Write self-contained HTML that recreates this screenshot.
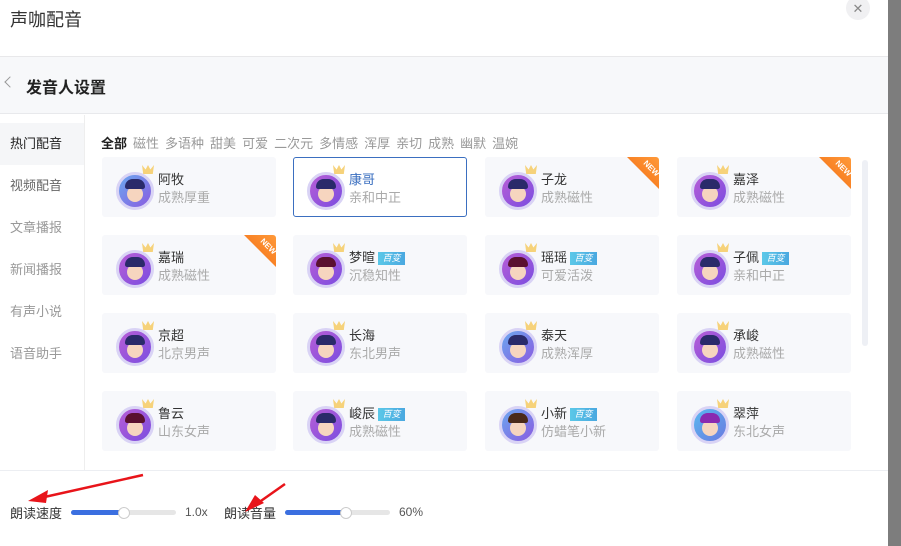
<!DOCTYPE html>
<html><head><meta charset="utf-8"><style>
*{margin:0;padding:0;box-sizing:border-box}
body{width:901px;height:546px;overflow:hidden;background:#fff;font-family:"Liberation Sans","Noto Sans CJK SC",sans-serif;position:relative;color:#333}
.abs{position:absolute}
.strip{left:888px;top:0;width:13px;height:546px;background:#7d7d7d}
.hdr{left:10px;top:6px;font-size:18px;color:#333}
.close{left:846px;top:-4px;width:24px;height:24px;border-radius:50%;background:#f0f0f2;color:#888;font-size:13px;text-align:center;line-height:26px}
.l1{left:0;top:56px;width:888px;height:1px;background:#e8e8ea}
.sub{left:0;top:57px;width:888px;height:57px;background:#f7f8fa;border-bottom:1px solid #e8e9ec}
.sub .t{position:absolute;left:26px;top:17px;font-size:16px;font-weight:bold;color:#222}
.sub .b{position:absolute;left:6px;top:21px;width:8px;height:8px;border-left:1px solid #999;border-bottom:1px solid #999;transform:rotate(45deg)}
.side{left:0;top:115px;width:85px;height:355px;border-right:1px solid #eee}
.si{position:absolute;left:0;width:84px;height:42px;line-height:42px;padding-left:10px;font-size:13px;color:#999}
.tabs{left:101px;top:133px;font-size:13px;color:#999;white-space:nowrap}
.tabs span{margin-right:6px}
.card{position:absolute;width:174px;height:60px;background:#f7f8fb;border-radius:3px;overflow:hidden}
.card.sel{background:#fff;border:1px solid #3b6fc0}
.av{position:absolute;left:14px;top:15px;width:38px;height:38px;border-radius:50%;border:3px solid #d9d3f5;background:linear-gradient(135deg,#b85ed6,#7a4de0)}
.av .f{position:absolute;left:8px;top:11px;width:16px;height:16px;border-radius:50%;background:#f6d5bf}
.av .h{position:absolute;left:6px;top:4px;width:20px;height:10px;border-radius:10px 10px 3px 3px;background:#2a2a6a}
.cr{position:absolute;left:40px;top:8px;width:12px;height:9px;background:#f6d27a;clip-path:polygon(0 0,30% 50%,50% 0,70% 50%,100% 0,90% 100%,10% 100%)}
.nm{position:absolute;left:56px;top:12px;font-size:13px;color:#333}
.ds{position:absolute;left:56px;top:30px;font-size:13px;color:#aaa}
.tag{display:inline-block;margin-left:3px;width:27px;height:13px;background:linear-gradient(90deg,#5bc8e8,#4aa8e0);color:#fff;font-size:9px;line-height:13px;text-align:center;vertical-align:1px;font-style:italic}
.new{position:absolute;right:0;top:0;width:32px;height:32px;background:linear-gradient(45deg,#f26a10,#ff9a3a);clip-path:polygon(0 0,100% 0,100% 100%)}
.new i{position:absolute;right:-2px;top:7px;transform:rotate(45deg);font-size:8px;color:#fff;font-style:normal;font-weight:bold}
.scroll{left:862px;top:160px;width:6px;height:186px;background:#eef0f5;border-radius:3px}
.l2{left:0;top:470px;width:888px;height:1px;background:#eceef2}
.lbl{font-size:13px;color:#333;top:503px}
.tr{height:5px;border-radius:3px;background:#e6e6e6;top:510px}
.fill{height:5px;border-radius:3px;background:#3b6fe0;top:510px}
.kn{width:12px;height:12px;border-radius:50%;background:#fff;border:1px solid #ccc;top:507px}
.val{font-size:12px;color:#555;top:505px}
</style></head><body>
<div class="abs strip"></div>
<div class="abs hdr">声咖配音</div>
<div class="abs close">✕</div>
<div class="abs l1"></div>
<div class="abs sub"><div class="b"></div><div class="t">发音人设置</div></div>
<div class="abs side">
<div class="si" style="top:8px;background:#f5f6f8;color:#222">热门配音</div>
<div class="si" style="top:50px;color:#666">视频配音</div>
<div class="si" style="top:92px">文章播报</div>
<div class="si" style="top:134px">新闻播报</div>
<div class="si" style="top:176px">有声小说</div>
<div class="si" style="top:218px">语音助手</div>
</div>
<div class="abs tabs"><span style="color:#222;font-weight:bold">全部</span><span>磁性</span><span>多语种</span><span>甜美</span><span>可爱</span><span>二次元</span><span>多情感</span><span>浑厚</span><span>亲切</span><span>成熟</span><span>幽默</span><span>温婉</span></div>

<div class="card" style="left:102px;top:157px"><div class="av" style="background:linear-gradient(135deg,#6aa8f0,#8a5be0)"><div class="f"></div><div class="h"></div></div><div class="cr"></div><div class="nm">阿牧</div><div class="ds">成熟厚重</div></div>
<div class="card sel" style="left:293px;top:157px"><div class="av" style="left:13px;top:14px"><div class="f"></div><div class="h"></div></div><div class="cr" style="left:39px;top:7px"></div><div class="nm" style="left:55px;top:11px;color:#3b6fc0">康哥</div><div class="ds" style="left:55px;top:29px">亲和中正</div></div>
<div class="card" style="left:485px;top:157px"><div class="av"><div class="f"></div><div class="h"></div></div><div class="cr"></div><div class="nm">子龙</div><div class="ds">成熟磁性</div><div class="new"><i>NEW</i></div></div>
<div class="card" style="left:677px;top:157px"><div class="av"><div class="f"></div><div class="h"></div></div><div class="cr"></div><div class="nm">嘉泽</div><div class="ds">成熟磁性</div><div class="new"><i>NEW</i></div></div>

<div class="card" style="left:102px;top:235px"><div class="av"><div class="f"></div><div class="h"></div></div><div class="cr"></div><div class="nm">嘉瑞</div><div class="ds">成熟磁性</div><div class="new"><i>NEW</i></div></div>
<div class="card" style="left:293px;top:235px"><div class="av"><div class="f"></div><div class="h" style="background:#5a1030"></div></div><div class="cr"></div><div class="nm">梦暄<span class="tag">百变</span></div><div class="ds">沉稳知性</div></div>
<div class="card" style="left:485px;top:235px"><div class="av"><div class="f"></div><div class="h" style="background:#5a1030"></div></div><div class="cr"></div><div class="nm">瑶瑶<span class="tag">百变</span></div><div class="ds">可爱活泼</div></div>
<div class="card" style="left:677px;top:235px"><div class="av"><div class="f"></div><div class="h"></div></div><div class="cr"></div><div class="nm">子佩<span class="tag">百变</span></div><div class="ds">亲和中正</div></div>

<div class="card" style="left:102px;top:313px"><div class="av"><div class="f"></div><div class="h"></div></div><div class="cr"></div><div class="nm">京超</div><div class="ds">北京男声</div></div>
<div class="card" style="left:293px;top:313px"><div class="av"><div class="f"></div><div class="h"></div></div><div class="cr"></div><div class="nm">长海</div><div class="ds">东北男声</div></div>
<div class="card" style="left:485px;top:313px"><div class="av" style="background:linear-gradient(135deg,#6aa8f0,#8a5be0)"><div class="f"></div><div class="h"></div></div><div class="cr"></div><div class="nm">泰天</div><div class="ds">成熟浑厚</div></div>
<div class="card" style="left:677px;top:313px"><div class="av"><div class="f"></div><div class="h"></div></div><div class="cr"></div><div class="nm">承峻</div><div class="ds">成熟磁性</div></div>

<div class="card" style="left:102px;top:391px"><div class="av"><div class="f"></div><div class="h" style="background:#5a1030"></div></div><div class="cr"></div><div class="nm">鲁云</div><div class="ds">山东女声</div></div>
<div class="card" style="left:293px;top:391px"><div class="av"><div class="f"></div><div class="h"></div></div><div class="cr"></div><div class="nm">峻辰<span class="tag">百变</span></div><div class="ds">成熟磁性</div></div>
<div class="card" style="left:485px;top:391px"><div class="av" style="background:linear-gradient(135deg,#6aa8f0,#8a5be0)"><div class="f"></div><div class="h" style="background:#4a2a1a"></div></div><div class="cr"></div><div class="nm">小新<span class="tag">百变</span></div><div class="ds">仿蜡笔小新</div></div>
<div class="card" style="left:677px;top:391px"><div class="av" style="background:linear-gradient(135deg,#5ab8f0,#6a7ae0)"><div class="f"></div><div class="h" style="background:#8a2ab0"></div></div><div class="cr"></div><div class="nm">翠萍</div><div class="ds">东北女声</div></div>

<div class="abs scroll"></div>
<div class="abs l2"></div>

<div class="abs lbl" style="left:10px">朗读速度</div>
<div class="abs tr" style="left:71px;width:105px"></div>
<div class="abs fill" style="left:71px;width:53px"></div>
<div class="abs kn" style="left:118px"></div>
<div class="abs val" style="left:185px">1.0x</div>
<div class="abs lbl" style="left:224px">朗读音量</div>
<div class="abs tr" style="left:285px;width:105px"></div>
<div class="abs fill" style="left:285px;width:60px"></div>
<div class="abs kn" style="left:340px"></div>
<div class="abs val" style="left:399px">60%</div>

<svg class="abs" style="left:0;top:470px" width="300" height="70">
<g stroke="#e8141a" stroke-width="2.5" fill="#e8141a">
<line x1="143" y1="5" x2="40" y2="28"/><polygon points="28,31 48,20 46,33" stroke="none"/>
<line x1="285" y1="14" x2="258" y2="33"/><polygon points="245,42 255,25 264,33" stroke="none"/>
</g></svg>
</body></html>
